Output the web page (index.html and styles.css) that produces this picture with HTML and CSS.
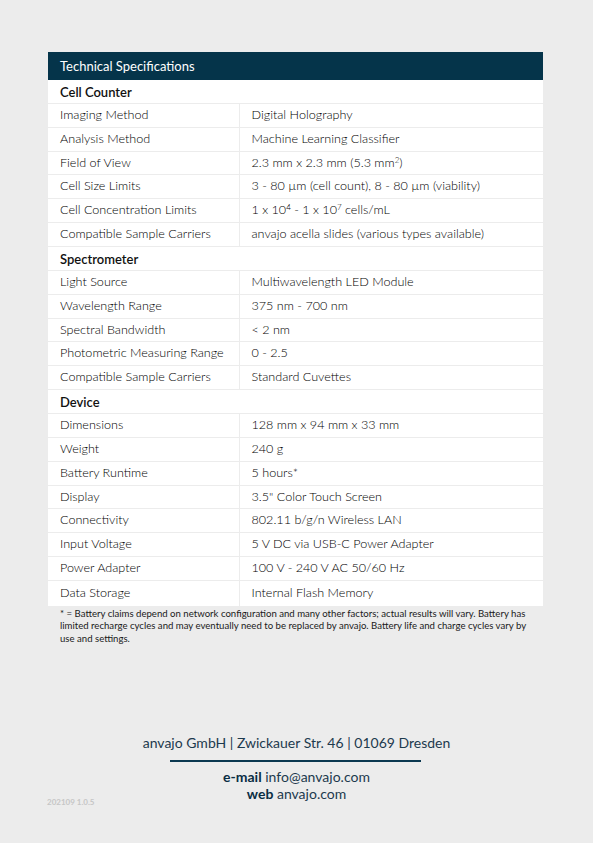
FILE: index.html
```html
<!DOCTYPE html>
<html>
<head>
<meta name="viewport" content="width=device-width, initial-scale=1">
<link rel="stylesheet" href="styles.css">
</head>
<body>
  <div class="page">
    <table class="specs">
      <tr class="title"><th colspan="2">Technical Specifications</th></tr>

      <tr class="section"><td colspan="2">Cell Counter</td></tr>
      <tr><td>Imaging Method</td><td>Digital Holography</td></tr>
      <tr><td>Analysis Method</td><td>Machine Learning Classifier</td></tr>
      <tr><td>Field of View</td><td>2.3 mm x 2.3 mm (5.3 mm<sup>2</sup>)</td></tr>
      <tr><td>Cell Size Limits</td><td>3 - 80 µm (cell count), 8 - 80 µm (viability)</td></tr>
      <tr><td>Cell Concentration Limits</td><td>1 x 10<sup>4</sup> - 1 x 10<sup>7</sup> cells/mL</td></tr>
      <tr><td>Compatible Sample Carriers</td><td>anvajo acella slides (various types available)</td></tr>

      <tr class="section"><td colspan="2">Spectrometer</td></tr>
      <tr><td>Light Source</td><td>Multiwavelength LED Module</td></tr>
      <tr><td>Wavelength Range</td><td>375 nm - 700 nm</td></tr>
      <tr><td>Spectral Bandwidth</td><td>&lt; 2 nm</td></tr>
      <tr><td>Photometric Measuring Range</td><td>0 - 2.5</td></tr>
      <tr><td>Compatible Sample Carriers</td><td>Standard Cuvettes</td></tr>

      <tr class="section"><td colspan="2">Device</td></tr>
      <tr><td>Dimensions</td><td>128 mm x 94 mm x 33 mm</td></tr>
      <tr><td>Weight</td><td>240 g</td></tr>
      <tr><td>Battery Runtime</td><td>5 hours*</td></tr>
      <tr><td>Display</td><td>3.5" Color Touch Screen</td></tr>
      <tr><td>Connectivity</td><td>802.11 b/g/n Wireless LAN</td></tr>
      <tr><td>Input Voltage</td><td>5 V DC via USB-C Power Adapter</td></tr>
      <tr><td>Power Adapter</td><td>100 V - 240 V AC 50/60 Hz</td></tr>
      <tr class="last"><td>Data Storage</td><td>Internal Flash Memory</td></tr>
    </table>

    <p class="note">* = Battery claims depend on network configuration and many other factors; actual results will vary. Battery has limited recharge cycles and may eventually need to be replaced by anvajo. Battery life and charge cycles vary by use and settings.</p>
  </div>

  <div class="footer">
    <div class="address">anvajo GmbH | Zwickauer Str. 46 | 01069 Dresden</div>
    <div class="rule"></div>
    <div class="contact"><b>e-mail</b> info@anvajo.com</div>
    <div class="contact"><b>web</b> anvajo.com</div>
  </div>

  <div class="version">202109 1.0.5</div>
</body>
</html>
```

FILE: styles.css
```css
* {
  box-sizing: border-box;
}

body {
  margin: 0;
  background: #ececec;
  font-family: Lato, "Open Sans", sans-serif;
  font-weight: 300;
  color: #000;
}

/* Spec sheet block */
.page {
  width: 495px;
  margin: 0 0 0 48px;
  padding-top: 52px;
}

.specs {
  width: 100%;
  border-collapse: collapse;
  background: #fff;
  font-size: 12.6px;
}

.specs th {
  background: #05344a;
  color: #fff;
  font-weight: 400;
  text-align: left;
  height: 28px;
  padding: 1px 12px 0;
  line-height: 27px;
  font-size: 13px;
}

.specs td {
  padding: 4px 12px 4px 12px;
  line-height: 14.86px;
  border-bottom: 1px solid #ececec;
  vertical-align: middle;
  white-space: nowrap;
}

.specs td:first-child {
  width: 191px;
  border-right: 1px solid #ececec;
}

.specs tr.section td {
  font-weight: 600;
  font-size: 13px;
  color: #111;
  border-right: none;
  padding-top: 5px;
  padding-bottom: 3px;
}

.specs tr.last td {
  border-bottom: none;
  padding-top: 5px;
  padding-bottom: 5px;
}

.specs sup {
  font-size: 8px;
  line-height: 0;
  vertical-align: 4px;
}

.note {
  margin: 2px 0 0;
  padding: 0 6px 0 12px;
  font-size: 9.6px;
  font-weight: 400;
  line-height: 12.5px;
  color: #1a1a1a;
}

/* Address block */
.footer {
  margin-top: 89px;
  width: 593px;
  text-align: center;
  color: #1d3a4e;
  font-size: 14px;
  font-weight: 400;
}

.address {
  line-height: 18px;
}

.rule {
  width: 251px;
  height: 1.5px;
  background: #0b3850;
  margin: 8px auto 6px 170px;
}

.contact {
  line-height: 17px;
}

.contact b {
  color: #0b2e44;
  font-weight: 700;
}

.version {
  margin: 0 0 0 47px;
  font-size: 8px;
  font-weight: 700;
  color: #c6c6c6;
  position: relative;
  top: -5px;
}
```
